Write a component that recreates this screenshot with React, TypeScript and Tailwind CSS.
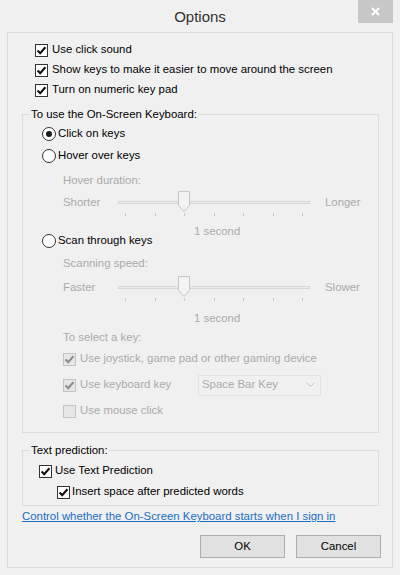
import React from 'react';

const dim = 'text-[#aaaaaa]';

function Check({ checked, disabled }: { checked?: boolean; disabled?: boolean }) {
  return (
    <span
      className={`flex h-[13px] w-[13px] shrink-0 items-center justify-center border ${
        disabled ? 'border-[#c4c4c4] bg-[#e6e6e6]' : 'border-[#333333] bg-white'
      }`}
    >
      {checked && (
        <svg width="11" height="11" viewBox="0 0 11 11">
          <path
            d="M1.6 5.6 L4.2 8.3 L9.4 2.2"
            fill="none"
            stroke={disabled ? '#8c8c8c' : '#111111'}
            strokeWidth="2.1"
          />
        </svg>
      )}
    </span>
  );
}

function Radio({ selected }: { selected?: boolean }) {
  return (
    <span className="flex h-[14px] w-[14px] shrink-0 items-center justify-center rounded-full border border-[#333333] bg-white">
      {selected && <span className="h-[6px] w-[6px] rounded-full bg-[#1a1a1a]" />}
    </span>
  );
}

function Slider({ left, right, mt }: { left: string; right: string; mt: string }) {
  return (
    <div className={mt}>
      <div className="flex h-[20px] items-center">
        <span className={`w-[55px] ${dim}`}>{left}</span>
        <div className="relative h-[20px] w-[192px]">
          <div className="absolute left-0 right-0 top-[8px] h-[3px] border border-[#d6d6d6] bg-[#ececec]" />
          <svg className="absolute left-[60px] top-[-2px]" width="12" height="21" viewBox="0 0 12 21">
            <path d="M0.5 0.5 H11.5 V14.5 L6 20.5 L0.5 14.5 Z" fill="#f3f3f3" stroke="#c6c6c6" />
          </svg>
        </div>
        <span className={`ml-[15px] ${dim}`}>{right}</span>
      </div>
      <div className="ml-[55px] flex h-[3px] w-[192px] justify-between px-[7px]">
        {[0, 1, 2, 3, 4, 5, 6].map((i) => (
          <span key={i} className="h-[3px] w-px bg-[#c8c8c8]" />
        ))}
      </div>
    </div>
  );
}

export default function App() {
  return (
    <div
      className="h-[575px] w-[400px] overflow-hidden bg-[#f0f0f0] text-[11.4px] text-black"
      style={{ fontFamily: '"Liberation Sans", Arial, sans-serif' }}
    >
      <div className="relative flex h-[32px] items-center justify-center pt-[2px]">
        <span className="text-[15px] text-[#333333]">Options</span>
        <div className="absolute right-[7px] top-0 flex h-[23px] w-[35px] items-center justify-center bg-[#c7c7c7]">
          <svg width="9" height="9" viewBox="0 0 9 9">
            <path d="M1 1 L8 8 M8 1 L1 8" stroke="#ffffff" strokeWidth="2" />
          </svg>
        </div>
      </div>

      <div className="mx-[7px] h-[536px] border border-[#dadada] pt-[7px]">
        <div className="pl-[27px]">
          {['Use click sound', 'Show keys to make it easier to move around the screen', 'Turn on numeric key pad'].map(
            (t) => (
              <label key={t} className="flex h-[20px] items-center gap-[4px]">
                <Check checked />
                <span>{t}</span>
              </label>
            )
          )}
        </div>

        <fieldset className="ml-[14px] mr-[13px] mt-[7px] border border-[#dcdcdc] pb-[11px]">
          <legend className="ml-[7px] px-px leading-[14px]">To use the On-Screen Keyboard:</legend>
          <div className="pl-[19px]">
            <div className="mt-[3px] flex h-[20px] items-center gap-[2px]">
              <Radio selected />
              <span>Click on keys</span>
            </div>
            <div className="mt-[2px] flex h-[20px] items-center gap-[2px]">
              <Radio />
              <span>Hover over keys</span>
            </div>
          </div>
          <div className="pl-[40px]">
            <div className={`mt-[7px] flex h-[16px] items-center ${dim}`}>Hover duration:</div>
            <Slider left="Shorter" right="Longer" mt="mt-[4px]" />
            <div className={`ml-[131px] mt-[10px] h-[10px] leading-[10px] ${dim}`}>1 second</div>
          </div>
          <div className="flex h-[10px] items-center gap-[2px] pl-[19px]">
            <Radio />
            <span>Scan through keys</span>
          </div>
          <div className="pl-[40px]">
            <div className={`mt-[10px] flex h-[16px] items-center ${dim}`}>Scanning speed:</div>
            <Slider left="Faster" right="Slower" mt="mt-[6px]" />
            <div className={`ml-[131px] mt-[12px] h-[10px] leading-[10px] ${dim}`}>1 second</div>
            <div className={`mt-[7px] flex h-[16px] items-center ${dim}`}>To select a key:</div>
            <div className="mt-[3px] flex h-[20px] items-center gap-[4px]">
              <Check checked disabled />
              <span className={dim}>Use joystick, game pad or other gaming device</span>
            </div>
            <div className="mt-[5px] flex h-[22px] items-center gap-[4px]">
              <Check checked disabled />
              <span className={`w-[114px] ${dim}`}>Use keyboard key</span>
              <div className="flex h-[21px] w-[123px] items-center justify-between border border-[#e2e2e2] pl-[3px] pr-[5px]">
                <span className={dim}>Space Bar Key</span>
                <svg width="9" height="6" viewBox="0 0 9 6">
                  <path d="M0.5 0.5 L4.5 4.5 L8.5 0.5" fill="none" stroke="#c4c4c4" />
                </svg>
              </div>
            </div>
            <div className="mt-[5px] flex h-[20px] items-center gap-[4px]">
              <Check disabled />
              <span className={dim}>Use mouse click</span>
            </div>
          </div>
        </fieldset>

        <fieldset className="ml-[14px] mr-[13px] mt-[10px] border border-[#dcdcdc] pb-[3px]">
          <legend className="ml-[7px] px-px leading-[14px]">Text prediction:</legend>
          <div className="pl-[16px]">
            <label className="mt-[4px] flex h-[20px] items-center gap-[3px]">
              <Check checked />
              <span>Use Text Prediction</span>
            </label>
            <label className="ml-[18px] mt-[1px] flex h-[20px] items-center gap-[2px]">
              <Check checked />
              <span>Insert space after predicted words</span>
            </label>
          </div>
        </fieldset>

        <div className="ml-[14px] mt-[3px] flex h-[16px] items-center">
          <a className="text-[#1a6dc4] underline">Control whether the On-Screen Keyboard starts when I sign in</a>
        </div>

        <div className="mr-[11px] mt-[10px] flex justify-end gap-[11px]">
          <button className="h-[23px] w-[85px] border border-[#adadad] bg-[#e1e1e1]">OK</button>
          <button className="h-[23px] w-[85px] border border-[#adadad] bg-[#e1e1e1]">Cancel</button>
        </div>
      </div>
    </div>
  );
}
